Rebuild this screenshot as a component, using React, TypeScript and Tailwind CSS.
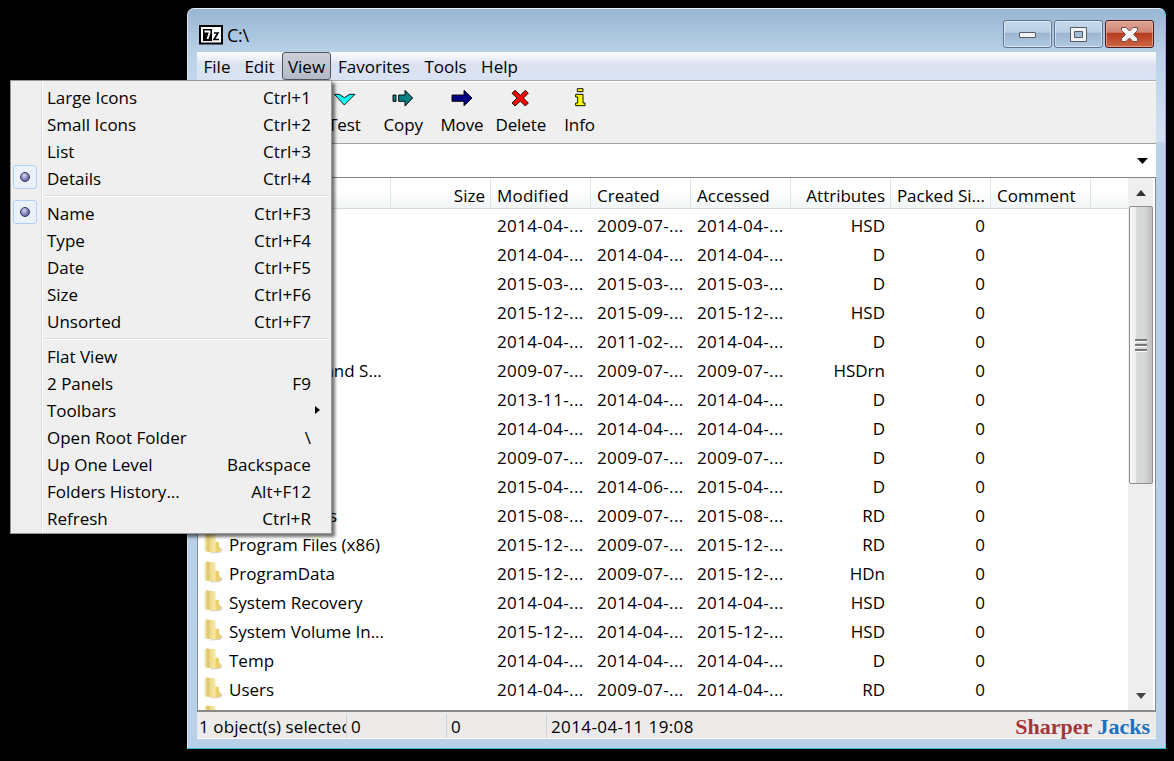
import type { ReactNode } from 'react';
import clsx from 'clsx';

interface MenuEntry {
  label: string;
  shortcut?: string;
  checked?: boolean;
  submenu?: boolean;
}

interface FileRow {
  name: string;
  modified: string;
  created: string;
  accessed: string;
  attributes: string;
}

const menuBar = [
  { label: 'File', className: 'w-[40px]' },
  { label: 'Edit', className: 'w-[45px]' },
  { label: 'View', className: 'w-[49px] rounded-[3px] border border-[#52555c] bg-linear-to-b from-[#cdd0d8] to-[#b4b9c8]' },
  { label: 'Favorites', className: 'w-[86px]' },
  { label: 'Tools', className: 'w-[57px]' },
  { label: 'Help', className: 'w-[51px]' },
];

const viewMenu: MenuEntry[][] = [
  [
    { label: 'Large Icons', shortcut: 'Ctrl+1' },
    { label: 'Small Icons', shortcut: 'Ctrl+2' },
    { label: 'List', shortcut: 'Ctrl+3' },
    { label: 'Details', shortcut: 'Ctrl+4', checked: true },
  ],
  [
    { label: 'Name', shortcut: 'Ctrl+F3', checked: true },
    { label: 'Type', shortcut: 'Ctrl+F4' },
    { label: 'Date', shortcut: 'Ctrl+F5' },
    { label: 'Size', shortcut: 'Ctrl+F6' },
    { label: 'Unsorted', shortcut: 'Ctrl+F7' },
  ],
  [
    { label: 'Flat View' },
    { label: '2 Panels', shortcut: 'F9' },
    { label: 'Toolbars', submenu: true },
    { label: 'Open Root Folder', shortcut: '\\' },
    { label: 'Up One Level', shortcut: 'Backspace' },
    { label: 'Folders History...', shortcut: 'Alt+F12' },
    { label: 'Refresh', shortcut: 'Ctrl+R' },
  ],
];

const row = (name: string, modified: string, created: string, accessed: string, attributes: string): FileRow => ({
  name,
  modified,
  created,
  accessed,
  attributes,
});

const files: FileRow[] = [
  row('', '2014-04-...', '2009-07-...', '2014-04-...', 'HSD'),
  row('', '2014-04-...', '2014-04-...', '2014-04-...', 'D'),
  row('', '2015-03-...', '2015-03-...', '2015-03-...', 'D'),
  row('', '2015-12-...', '2015-09-...', '2015-12-...', 'HSD'),
  row('', '2014-04-...', '2011-02-...', '2014-04-...', 'D'),
  row('Documents and S...', '2009-07-...', '2009-07-...', '2009-07-...', 'HSDrn'),
  row('', '2013-11-...', '2014-04-...', '2014-04-...', 'D'),
  row('', '2014-04-...', '2014-04-...', '2014-04-...', 'D'),
  row('', '2009-07-...', '2009-07-...', '2009-07-...', 'D'),
  row('', '2015-04-...', '2014-06-...', '2015-04-...', 'D'),
  row('Program Files', '2015-08-...', '2009-07-...', '2015-08-...', 'RD'),
  row('Program Files (x86)', '2015-12-...', '2009-07-...', '2015-12-...', 'RD'),
  row('ProgramData', '2015-12-...', '2009-07-...', '2015-12-...', 'HDn'),
  row('System Recovery', '2014-04-...', '2014-04-...', '2014-04-...', 'HSD'),
  row('System Volume In...', '2015-12-...', '2014-04-...', '2015-12-...', 'HSD'),
  row('Temp', '2014-04-...', '2014-04-...', '2014-04-...', 'D'),
  row('Users', '2014-04-...', '2009-07-...', '2014-04-...', 'RD'),
];

const columns = [
  { label: '', className: 'w-[193px]' },
  { label: 'Size', className: 'w-[100px] justify-end' },
  { label: 'Modified', className: 'w-[100px] tracking-[0.2px]' },
  { label: 'Created', className: 'w-[100px]' },
  { label: 'Accessed', className: 'w-[100px]' },
  { label: 'Attributes', className: 'w-[100px] justify-end' },
  { label: 'Packed Si...', className: 'w-[100px] justify-end' },
  { label: 'Comment', className: 'w-[100px]' },
];

function ToolIcon({ viewBox, width, children }: { viewBox: string; width: number; children: ReactNode }) {
  return (
    <svg viewBox={viewBox} width={width} height={19} stroke="#000" strokeWidth={2.8} strokeLinejoin="miter">
      {children}
    </svg>
  );
}

const tools = [
  {
    label: 'Test',
    icon: (
      <ToolIcon viewBox="37 22 69 57" width={23}>
        <path d="M41 41H56L71 51L87 41H103L71 73Z" fill="#00ffff" />
      </ToolIcon>
    ),
  },
  {
    label: 'Copy',
    icon: (
      <ToolIcon viewBox="218 22 66 57" width={22}>
        <path d="M221 43H230V62H221Z" fill="#008080" />
        <path d="M238 43H257V29L280 52L257 76V62H238Z" fill="#008080" />
      </ToolIcon>
    ),
  },
  {
    label: 'Move',
    icon: (
      <ToolIcon viewBox="394 22 66 57" width={22}>
        <path d="M397 43H433V29L457 52L433 76V62H397Z" fill="#000080" />
      </ToolIcon>
    ),
  },
  {
    label: 'Delete',
    icon: (
      <ToolIcon viewBox="577 22 57 57" width={19}>
        <path d="M589 29L605 44L620 29L629 38L614 52L629 67L620 76L605 61L589 76L580 67L595 52L580 38Z" fill="#ff0000" />
      </ToolIcon>
    ),
  },
  {
    label: 'Info',
    icon: (
      <ToolIcon viewBox="762 22 36 57" width={12}>
        <path d="M772 24H789V33H772Z" fill="#ffff00" />
        <path d="M767 41H789V67H795V75H767V67H773V49H767Z" fill="#ffff00" />
      </ToolIcon>
    ),
  },
];

function FolderIcon() {
  return (
    <svg className="-mt-[5px] -ml-px" width="22" height="24" viewBox="0 0 22 24">
      <defs>
        <linearGradient id="folder-left" x1="0" x2="1" y1="0" y2="0">
          <stop offset="0" stopColor="#f6eab0" />
          <stop offset="1" stopColor="#e3cd7c" />
        </linearGradient>
        <linearGradient id="folder-panel" x1="0" x2="1" y1="0" y2="0">
          <stop offset="0" stopColor="#d9bf66" />
          <stop offset="0.4" stopColor="#efdb8e" />
          <stop offset="1" stopColor="#f7e9a6" />
        </linearGradient>
      </defs>
      <path d="M16 16L21 20L18 23L8 23.5Z" fill="#a9adb0" opacity="0.5" />
      <path d="M13 11.5L17 12V16.500L18.500 18V21.500L13 22.500Z" fill="#ecd06a" />
      <path d="M2.500 3.500L6 2V22L2.500 21Z" fill="url(#folder-left)" />
      <path d="M5.500 2.500L13.500 3.500V22.500L5.500 22Z" fill="url(#folder-panel)" />
    </svg>
  );
}

function CaptionButton({ className, children }: { className: string; children: ReactNode }) {
  return (
    <button className={clsx('flex h-7 w-[49px] items-center justify-center rounded-[3px] border', className)}>{children}</button>
  );
}

const glass =
  'border-[#60748f] bg-[linear-gradient(#c6d9eb,#b9cee3_44%,#9ab4d0_45%,#b2cae3)] shadow-[inset_0_0_0_1px_rgba(225,237,248,0.7)]';

function CaptionButtons() {
  return (
    <div className="flex gap-[2px]">
      <CaptionButton className={glass}>
        <span className="mt-[2px] h-[6px] w-[17px] rounded-[1px] border border-[#555c66] bg-[#f4f4f4]" />
      </CaptionButton>
      <CaptionButton className={glass}>
        <svg width="17" height="15" viewBox="0 0 17 15">
          <path d="M.5.5H16.500V14.500H.5Z" fill="#f3f3f3" stroke="#555c66" />
          <path d="M4.500 4.500H12.500V10.500H4.500Z" fill="#a3bbd5" stroke="#555c66" />
        </svg>
      </CaptionButton>
      <CaptionButton className="border-[#50191d] bg-[linear-gradient(#e0a697,#d18473_44%,#b8391d_45%,#cc6645)] shadow-[inset_0_0_0_1px_rgba(240,190,175,0.6)]">
        <svg width="19" height="17" viewBox="0 0 19 17">
          <path
            d="M1.500 1.500H6L9.500 5L13 1.500H17.500V4.500L13.500 8.500L17.500 12.500V15.500H13L9.500 12L6 15.500H1.500V12.500L5.500 8.500L1.500 4.500Z"
            fill="#f4f4f4"
            stroke="#6d4a4c"
            strokeLinejoin="round"
          />
        </svg>
      </CaptionButton>
    </div>
  );
}

function TitleBar() {
  return (
    <div className="flex h-[43px] items-start justify-between pt-[11px] pr-[2px] pl-[2px]">
      <div className="flex items-center gap-1 pt-[3px]">
        <svg width="24" height="20" viewBox="0 0 24 20">
          <path d="M1 1H23V18.500H1Z" fill="#fff" stroke="#000" strokeWidth="2" />
          <path d="M4 4H13V16H4Z" fill="#000" />
          <path d="M5.500 6.500H10.500V8L8.500 14" fill="none" stroke="#fff" strokeWidth="1.800" />
          <path d="M15 8H19L15 14.500H20" fill="none" stroke="#000" strokeWidth="1.600" />
        </svg>
        <span className="text-[18px] leading-6 tracking-[-0.3px]">C:\</span>
      </div>
      <CaptionButtons />
    </div>
  );
}

function MenuBar() {
  return (
    <div className="flex h-[29px] border-b border-[#a5a8ad] bg-linear-to-b from-white via-[#dbe1f0] via-45% to-[#dae3f3]">
      {menuBar.map((entry) => (
        <div key={entry.label} className={clsx('flex h-7 shrink-0 items-center justify-center pt-px', entry.className)}>
          {entry.label}
        </div>
      ))}
    </div>
  );
}

function Toolbar() {
  return (
    <div className="flex h-[63px] border-t border-b border-t-white border-b-[#a3a3a3] bg-[#efefef] pl-[118px]">
      {tools.map((tool) => (
        <div key={tool.label} className="flex w-[58.800px] shrink-0 flex-col items-center pt-[6px]">
          {tool.icon}
          <span className="mt-[6px] leading-6 tracking-[-0.1px]">{tool.label}</span>
        </div>
      ))}
    </div>
  );
}

function FileList() {
  return (
    <div className="flex h-[534px] border-r border-b-2 border-[#8a8a8a] bg-white">
      <div className="flex min-w-0 flex-1 flex-col overflow-hidden border-l border-[#8a8f96]">
        <div className="flex h-[31px] shrink-0 border-b border-[#d5d5d5] bg-linear-to-b from-white from-40% to-[#f1f5f5]">
          {columns.map((column) => (
            <div
              key={column.label}
              className={clsx(
                'flex shrink-0 items-center border-r border-[#dfe3e6] pt-[5px] pr-[5px] pl-[6px] whitespace-nowrap',
                column.className,
              )}
            >
              {column.label}
            </div>
          ))}
        </div>
        <div className="flex flex-col pt-[2px]">
          {files.map((file, index) => (
            <div key={index} className="flex h-[29px] shrink-0 items-center">
              <div className="flex w-[293px] items-center gap-[5px] pl-[5px]">
                <FolderIcon />
                <span>{file.name}</span>
              </div>
              <span className="w-[100px] pl-[6px] tracking-[0.35px]">{file.modified}</span>
              <span className="w-[100px] pl-[6px] tracking-[0.35px]">{file.created}</span>
              <span className="w-[100px] pl-[6px] tracking-[0.35px]">{file.accessed}</span>
              <span className="w-[100px] pr-[6px] text-right">{file.attributes}</span>
              <span className="w-[100px] pr-[6px] text-right">0</span>
            </div>
          ))}
          <div className="h-[6px] overflow-hidden pt-[4px] pl-[5px]">
            <FolderIcon />
          </div>
        </div>
      </div>
      <ScrollBar />
    </div>
  );
}

function ScrollBar() {
  return (
    <div className="mr-[2px] flex w-[25px] flex-col items-center bg-[#eeeeee]">
      <div className="flex h-[28px] items-center pt-px">
        <svg width="10" height="6" viewBox="0 0 10 6">
          <path d="M5 0L10 6H0Z" fill="#333" />
        </svg>
      </div>
      <div className="flex h-[278px] w-6 flex-col items-center justify-center gap-[2px] rounded-[2px] border border-[#8f8f8f] bg-[linear-gradient(90deg,#f7f7f7,#ececec_28%,#d6d9d9_30%,#d6d9d9_65%,#c2c2c2_95%)]">
        {[0, 1, 2].map((grip) => (
          <span key={grip} className="h-[3px] w-3 border-b border-white bg-[#777]" />
        ))}
      </div>
      <div className="flex flex-1 items-end pb-[11px]">
        <svg width="10" height="6" viewBox="0 0 10 6">
          <path d="M0 0H10L5 6Z" fill="#444" />
        </svg>
      </div>
    </div>
  );
}

function StatusBar() {
  return (
    <div className="flex h-[27px] items-center border-b border-white bg-[#ecebe9] pt-[2px]">
      <div className="h-full w-[150px] overflow-hidden border-r border-[#d2d2d2] pt-px pl-[2px] leading-6 tracking-[0.1px] whitespace-nowrap">
        1 object(s) selected
      </div>
      <div className="h-full w-[100px] border-r border-[#d2d2d2] pt-px pl-1 leading-6">0</div>
      <div className="h-full w-[100px] border-r border-[#d2d2d2] pt-px pl-1 leading-6">0</div>
      <div className="h-full flex-1 pt-px pl-1 leading-6 tracking-[0.4px]">2014-04-11 19:08</div>
      <div className="pt-[2px] pr-[6px] font-['Liberation_Serif',serif] text-[22px] leading-6 font-bold whitespace-nowrap text-[#a3383c]">
        Sharper <span className="text-[#1b70c0]">Jacks</span>
      </div>
    </div>
  );
}

function MenuItem({ item }: { item: MenuEntry }) {
  return (
    <div className="flex h-[27px] items-center">
      <div className="flex h-full w-[36px] items-start pl-[2px]">
        {item.checked && (
          <span className="flex h-6 w-6 items-center justify-center rounded-[3px] border border-[#aecff7] bg-[#ebf1f8]">
            <span className="h-[10px] w-[10px] rounded-full border border-[#30305c] bg-radial-[at_40%_30%] from-[#d6d6f3] to-[#38388a]" />
          </span>
        )}
      </div>
      <span className="flex-1">{item.label}</span>
      {item.shortcut && <span className="pr-5 tracking-[0.1px]">{item.shortcut}</span>}
      {item.submenu && (
        <svg className="mt-[-2px] mr-[11px]" width="5" height="8" viewBox="0 0 5 8">
          <path d="M0 0L5 4L0 8Z" fill="#000" />
        </svg>
      )}
    </div>
  );
}

function ViewMenu() {
  return (
    <div className="absolute top-20 left-[10px] w-[322px] border border-[#979797] bg-[linear-gradient(90deg,#efefef_30px,#e0e0e0_30px,#e0e0e0_31px,#ffffff_31px,#ffffff_32px,#efefef_32px)] pt-[3px] pb-px shadow-[3px_3px_3px_rgba(0,0,0,0.55)]">
      {viewMenu.map((group, index) => (
        <div key={index}>
          {index > 0 && <div className="mt-[3px] mr-[3px] mb-[3px] ml-[33px] h-[2px] border-t border-[#dcdcdc] bg-white" />}
          {group.map((item) => (
            <MenuItem key={item.label} item={item} />
          ))}
        </div>
      ))}
    </div>
  );
}

export default function App() {
  return (
    <div className="relative h-[761px] w-[1174px] overflow-hidden bg-black pt-2 pl-[187px] font-['Open_Sans',sans-serif] text-[17px] leading-6 text-black">
      <div className="h-[741px] w-[979px] rounded-t-[7px] border-t border-r border-b border-l border-t-[#e3eef8] border-r-[#4fcbe2] border-b-[#2fc0d8] border-l-[#dbe8f4] bg-[linear-gradient(#98b5d2,#b9d1e8_44px,#d3e2f2_132px,#b9d1e8_134px)] px-[9px]">
        <TitleBar />
        <MenuBar />
        <Toolbar />
        <div className="flex h-[34px] items-center justify-end border-b border-[#7c8387] bg-white pr-[8px]">
          <svg width="11" height="6" viewBox="0 0 11 6">
            <path d="M0 0H11L5.500 6Z" fill="#000" />
          </svg>
        </div>
        <FileList />
        <StatusBar />
      </div>
      <ViewMenu />
    </div>
  );
}
